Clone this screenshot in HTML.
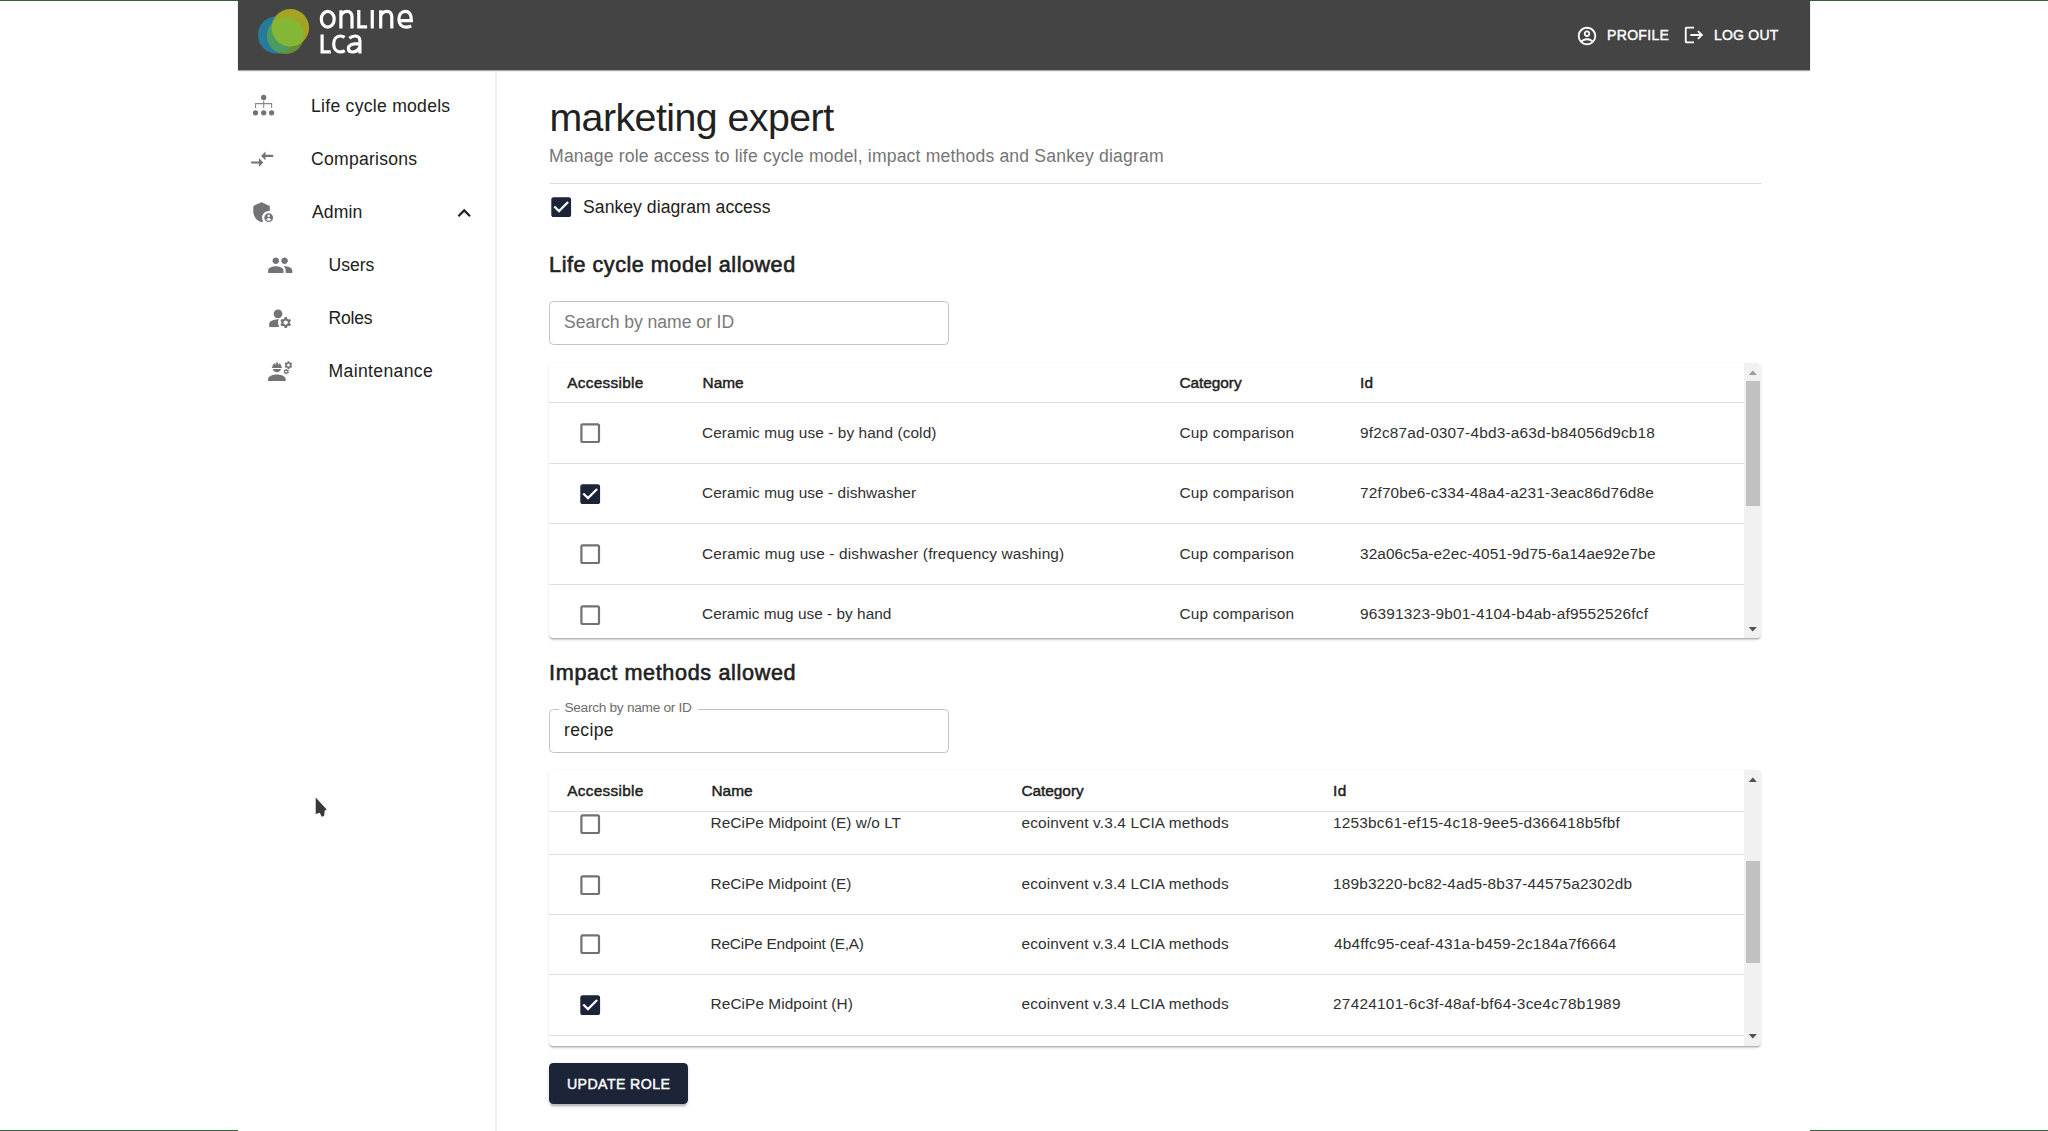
<!DOCTYPE html>
<html lang="en">
<head>
<meta charset="utf-8">
<title>marketing expert - Online LCA</title>
<style>
html,body{margin:0;padding:0;}
body{width:2048px;height:1131px;overflow:hidden;background:#fff;position:relative;font-family:"Liberation Sans",sans-serif;}
.abs,.t,.ic{position:absolute;}
.t{white-space:pre;font-weight:400;}
.t.m{-webkit-text-stroke:0.45px currentColor;}
.t.mm{-webkit-text-stroke:0.6px currentColor;}
.t.b{font-weight:700;}
.gl{position:absolute;height:1px;background:#30633a;}
.sep{position:absolute;height:1.1px;background:#e0e0e0;left:549.3px;width:1194.6px;}
.paper{position:absolute;background:#fff;border-radius:4.4px;box-shadow:0 1.8px 1.1px -1.1px rgba(0,0,0,.16),0 1.1px 1.1px 0 rgba(0,0,0,.09),0 1.1px 3.3px 0 rgba(0,0,0,.10);overflow:hidden;}
.sbt{position:absolute;right:0;top:0;bottom:0;width:17.6px;background:#f1f1f1;}
.thumb{position:absolute;left:1.9px;width:13.9px;background:#c1c1c1;}
</style>
</head>
<body>
<!-- frame lines -->
<div class="gl" style="left:0;top:0;width:238px"></div>
<div class="gl" style="left:1810px;top:0;width:238px"></div>
<div class="gl" style="left:0;top:1130px;width:238px"></div>
<div class="gl" style="left:1810px;top:1130px;width:238px"></div>

<!-- header -->
<div class="abs" id="hdr" style="left:238px;top:0;width:1572px;height:70px;background:#444444;box-shadow:0 1px 1px rgba(0,0,0,.35);"></div>
<!--LOGO_START--><svg class="abs" style="left:238px;top:0" width="240" height="70" viewBox="238 0 240 70">
<defs>
<clipPath id="cG"><circle cx="285.4" cy="35.7" r="18.4"/></clipPath>
<clipPath id="cB"><circle cx="276.6" cy="35.0" r="18.7"/></clipPath>
</defs>
<circle cx="276.6" cy="35.0" r="18.7" fill="#277a9b"/>
<circle cx="285.4" cy="35.7" r="18.4" fill="#6a8c35"/>
<g clip-path="url(#cG)"><circle cx="276.6" cy="35.0" r="18.7" fill="#4a9c60"/></g>
<circle cx="290.4" cy="27.7" r="18.7" fill="#a3a324"/>
<g clip-path="url(#cG)"><circle cx="290.4" cy="27.7" r="18.7" fill="#84b735"/></g>
<g fill="none" stroke="#fff" stroke-width="3.2" stroke-linejoin="miter">
<ellipse cx="327.75" cy="19.2" rx="6.45" ry="7.9"/>
<path d="M340.9 28.5V10.2M340.9 16.2C341.8 12.8 344.6 11.3 347 11.3C350.6 11.3 352 13.6 352 17.2V28.5"/>
<path d="M358.8 10V26.9H367.1"/>
<path d="M372.25 10V28.5"/>
<path d="M380.7 28.5V10.2M380.7 16.2C381.6 12.8 384.4 11.3 386.8 11.3C390.4 11.3 391.8 13.6 391.8 17.2V28.5"/>
<path d="M399 20.7H411.4C411.6 14.9 409.4 11.3 405.4 11.3C401.4 11.3 398.9 14.6 398.9 19.2C398.9 24 401.6 27.1 405.9 27.1C408 27.1 409.8 26.6 411.2 25.8"/>
<path d="M322.1 34.5V51.9H330.8"/>
<path d="M344.6 37.4C343.4 36.5 342 36 340.3 36C336.3 36 333.7 39.2 333.7 44C333.7 48.8 336.3 51.9 340.3 51.9C342 51.9 343.6 51.4 344.8 50.6"/>
<path d="M349.4 38.2C351 36.8 353 36 355 36C358.3 36 359.9 37.8 359.9 41V53.5M359.9 43.6C353 43.4 348.4 44.6 348.4 48.4C348.4 50.8 350.2 52 352.6 52C355.6 52 358.4 50 359.9 47"/>
</g>
</svg>
<!--LOGO_END-->
<!--HICONS_S--><svg class="ic" style="left:1575.7px;top:24.6px" width="22" height="22" viewBox="0 0 24 24" fill="#ffffff"><path d="M12 2C6.48 2 2 6.48 2 12s4.48 10 10 10 10-4.48 10-10S17.52 2 12 2zM7.07 18.28c.43-.9 3.05-1.78 4.93-1.78s4.51.88 4.93 1.78C15.57 19.36 13.86 20 12 20s-3.57-.64-4.93-1.72zm11.29-1.45c-1.43-1.74-4.9-2.33-6.36-2.33s-4.93.59-6.36 2.33C4.62 15.49 4 13.82 4 12c0-4.41 3.59-8 8-8s8 3.59 8 8c0 1.82-.62 3.49-1.64 4.83zM12 6c-1.94 0-3.5 1.56-3.5 3.5S10.060 13 12 13s3.5-1.56 3.5-3.5S13.94 6 12 6zm0 5c-.83 0-1.5-.67-1.5-1.5S11.17 8 12 8s1.5.67 1.5 1.5S12.83 11 12 11z"/></svg><svg class="ic" style="left:1682.5px;top:24.4px" width="22" height="22" viewBox="0 0 24 24" fill="#ffffff"><path d="M17 7l-1.41 1.41L18.17 11H8v2h10.17l-2.58 2.58L17 17l5-5zM4 5h8V3H4c-1.1 0-2 .9-2 2v14c0 1.1.9 2 2 2h8v-2H4V5z"/></svg><!--HICONS_E-->

<!-- sidebar -->
<div class="abs" style="left:495px;top:71px;width:2px;height:1060px;background:#efefef"></div>
<!--SICONS_S--><svg class="ic" style="left:246px;top:88px" width="36" height="36" viewBox="246 88 36 36">
<g fill="#737376"><circle cx="263.7" cy="97.4" r="2.65"/><circle cx="255.5" cy="112.8" r="2.65"/><circle cx="263.7" cy="112.8" r="2.65"/><circle cx="271.6" cy="112.8" r="2.65"/></g>
<path d="M255.5 108V103.6H271.6V108M263.7 100.5V108" fill="none" stroke="#88888c" stroke-width="1.1"/>
</svg><svg class="ic" style="left:249.1px;top:146.4px" width="26.4" height="26.4" viewBox="0 0 24 24" fill="#737376"><path d="M9.01 14H2v2h7.01v3L13 15l-3.99-4v3zm5.98-1v-3H22V8h-7.01V5L11 9l3.99 4z"/></svg><svg class="ic" style="left:249.5px;top:199.0px" width="26.4" height="26.4" viewBox="0 0 24 24" fill="#737376"><path d="M17 11c.34 0 .67.04 1 .09V6.27L10.5 3 3 6.27v4.91c0 4.54 3.2 8.79 7.5 9.82.55-.13 1.08-.32 1.6-.55-.69-.98-1.1-2.17-1.1-3.45 0-3.31 2.69-6 6-6z"/><path d="M17 13c-2.21 0-4 1.79-4 4s1.79 4 4 4 4-1.79 4-4-1.79-4-4-4zm0 1.380c.62 0 1.12.51 1.12 1.12s-.51 1.120-1.120 1.120-1.120-.51-1.120-1.120.5-1.120 1.120-1.120zm0 5.370c-.93 0-1.740-.46-2.240-1.170.05-.72 1.510-1.080 2.240-1.080s2.190.36 2.240 1.080c-.5.71-1.310 1.170-2.240 1.170z"/></svg><svg class="ic" style="left:451.4px;top:199.5px" width="26.4" height="26.4" viewBox="0 0 24 24" fill="#212121"><path d="M12 8l-6 6 1.41 1.410L12 10.830l4.590 4.580L18 14z"/></svg><svg class="ic" style="left:266.7px;top:251.7px" width="26.4" height="26.4" viewBox="0 0 24 24" fill="#737376"><path d="M16 11c1.660 0 2.990-1.340 2.990-3S17.660 5 16 5c-1.660 0-3 1.340-3 3s1.340 3 3 3zm-8 0c1.660 0 2.990-1.340 2.990-3S9.660 5 8 5C6.340 5 5 6.340 5 8s1.340 3 3 3zm0 2c-2.330 0-7 1.170-7 3.500V19h14v-2.500c0-2.330-4.670-3.500-7-3.500zm8 0c-.29 0-.62.020-.97.050 1.160.84 1.970 1.970 1.970 3.450V19h6v-2.500c0-2.330-4.670-3.500-7-3.500z"/></svg><svg class="ic" style="left:266.7px;top:304.6px" width="26.4" height="26.4" viewBox="0 0 24 24" fill="#737376"><circle cx="10" cy="8" r="4"/><path d="M10.670 13.020c-.22-.01-.44-.02-.67-.02-2.420 0-4.680.67-6.610 1.820-.88.520-1.390 1.500-1.390 2.530V20h9.260c-.79-1.130-1.260-2.510-1.260-4 0-1.070.25-2.070.67-2.980zM20.750 16c0-.22-.03-.42-.06-.63l1.140-1.010-1-1.730-1.450.49c-.32-.27-.68-.48-1.080-.63L18 11h-2l-.3 1.490c-.4.150-.76.360-1.080.63l-1.450-.49-1 1.730 1.140 1.010c-.3.210-.6.410-.6.630s.3.420.6.630l-1.140 1.010 1 1.730 1.450-.49c.32.270.68.480 1.080.63L16 21h2l.3-1.490c.4-.15.760-.36 1.080-.63l1.450.49 1-1.730-1.140-1.010c.03-.21.060-.41.060-.63zM17 18c-1.100 0-2-.9-2-2s.9-2 2-2 2 .9 2 2-.9 2-2 2z"/></svg><svg class="ic" style="left:266.7px;top:357.7px" width="26.4" height="26.4" viewBox="0 0 24 24" fill="#737376"><path d="M9 15c-2.670 0-8 1.340-8 4v2h16v-2c0-2.660-5.330-4-8-4zM22.100 6.840c.01-.11.020-.22.020-.34 0-.12-.01-.23-.03-.34l.74-.58c.07-.05.080-.15.040-.22l-.7-1.210c-.04-.08-.14-.1-.21-.08l-.86.350c-.18-.14-.38-.25-.59-.34l-.13-.93c-.02-.09-.09-.15-.18-.15h-1.400c-.09 0-.16.060-.17.150l-.13.930c-.21.090-.41.210-.59.340l-.87-.35c-.08-.03-.17 0-.21.080l-.7 1.210c-.04.080-.03.170.04.220l.74.580c-.02.110-.03.230-.03.340 0 .11.010.23.030.34l-.74.580c-.07.050-.08.150-.04.220l.7 1.210c.04.080.14.100.21.080l.87-.35c.18.140.38.250.59.340l.13.930c.010.09.080.15.170.15h1.400c.09 0 .16-.06.170-.15l.13-.93c.21-.09.41-.21.59-.34l.87.350c.08.030.17 0 .21-.08l.7-1.210c.04-.08.030-.17-.04-.22l-.73-.58zm-2.600.91c-.69 0-1.250-.56-1.250-1.250s.56-1.250 1.250-1.250 1.250.56 1.250 1.250-.56 1.250-1.250 1.250zM4.740 9h8.530c.27 0 .49-.22.490-.49v-.02c0-.27-.22-.49-.49-.49H13c0-1.480-.81-2.750-2-3.450v.95c0 .28-.22.500-.5.500s-.5-.22-.5-.5V4.140C9.680 4.060 9.350 4 9 4s-.68.060-1 .14V5.500c0 .28-.22.500-.5.500S7 5.780 7 5.500v-.95C5.810 5.250 5 6.520 5 8h-.26c-.27 0-.49.220-.49.490v.03c0 .26.220.48.490.48zM9 13c1.860 0 3.410-1.280 3.860-3H5.140c.45 1.720 2 3 3.860 3z"/><path transform="translate(17.5 12.4) scale(0.7) translate(-19.5 -6.5)" d="M22.1 6.84c.01-.11.02-.22.02-.34 0-.12-.01-.23-.03-.34l.74-.58c.07-.05.08-.15.04-.22l-.7-1.21c-.04-.08-.14-.1-.21-.08l-.86.35c-.18-.14-.38-.25-.59-.34l-.13-.93c-.02-.09-.09-.15-.18-.15h-1.4c-.09 0-.16.06-.17.15l-.13.93c-.21.09-.41.21-.59.34l-.87-.35c-.08-.03-.17 0-.21.08l-.7 1.21c-.04.08-.03.17.04.22l.74.58c-.02.11-.03.23-.03.34 0 .11.01.23.03.34l-.74.58c-.07.05-.08.15-.04.22l.7 1.21c.04.08.14.1.21.08l.87-.35c.18.14.38.25.59.34l.13.93c.01.09.08.15.17.15h1.4c.09 0 .16-.06.17-.15l.13-.93c.21-.09.41-.21.59-.34l.87.35c.08.03.17 0 .21-.08l.7-1.21c.04-.08.03-.17-.04-.22l-.73-.58zm-2.6.91c-.69 0-1.25-.56-1.25-1.25s.56-1.25 1.25-1.25 1.25.56 1.25 1.25-.56 1.25-1.25 1.25z"/></svg><!--SICONS_E-->

<!-- main -->
<div class="abs" style="left:549.3px;top:182.6px;width:1212.4px;height:1.1px;background:#e0e0e0"></div>

<div class="abs" style="left:549.3px;top:300.8px;width:399.7px;height:43.9px;box-sizing:border-box;border:1.1px solid #c4c4c4;border-radius:4.4px"></div>

<div class="paper" id="tb1" style="left:549.3px;top:362.5px;width:1212.2px;height:275.6px;">
  <div class="sbt">
    <svg class="abs" style="left:0;top:0" width="17.6" height="17.6" viewBox="0 0 17.6 17.6"><path d="M4.7 11.9 L8.8 7.4 L12.9 11.9z" fill="#9a9a9a"/></svg>
    <div class="thumb" style="top:18.1px;height:125.1px"></div>
    <svg class="abs" style="left:0;bottom:0" width="17.6" height="17.6" viewBox="0 0 17.6 17.6"><path d="M4.7 5.9 L8.8 10.4 L12.9 5.9z" fill="#505050"/></svg>
  </div>
</div>
<div class="sep" style="top:401.9px"></div>
<div class="sep" style="top:462.5px"></div>
<div class="sep" style="top:523.0px"></div>
<div class="sep" style="top:583.6px"></div>
<svg class="ic" style="left:547.60px;top:194.20px" width="26.4" height="26.4" viewBox="0 0 24 24"><path fill="#1c2438" d="M19 3H5c-1.11 0-2 .9-2 2v14c0 1.1.89 2 2 2h14c1.11 0 2-.9 2-2V5c0-1.1-.89-2-2-2zm-9 14l-5-5 1.41-1.41L10 14.17l7.59-7.59L19 8l-9 9z"/></svg>
<svg class="ic" style="left:576.70px;top:419.50px" width="26.4" height="26.4" viewBox="0 0 24 24"><path fill="#727274" d="M19 5v14H5V5h14m0-2H5c-1.1 0-2 .9-2 2v14c0 1.1.9 2 2 2h14c1.1 0 2-.9 2-2V5c0-1.1-.9-2-2-2z"/></svg>
<svg class="ic" style="left:576.70px;top:480.80px" width="26.4" height="26.4" viewBox="0 0 24 24"><path fill="#1c2438" d="M19 3H5c-1.11 0-2 .9-2 2v14c0 1.1.89 2 2 2h14c1.11 0 2-.9 2-2V5c0-1.1-.89-2-2-2zm-9 14l-5-5 1.41-1.41L10 14.17l7.59-7.59L19 8l-9 9z"/></svg>
<svg class="ic" style="left:576.70px;top:541.10px" width="26.4" height="26.4" viewBox="0 0 24 24"><path fill="#727274" d="M19 5v14H5V5h14m0-2H5c-1.1 0-2 .9-2 2v14c0 1.1.9 2 2 2h14c1.1 0 2-.9 2-2V5c0-1.1-.9-2-2-2z"/></svg>
<svg class="ic" style="left:576.70px;top:601.80px" width="26.4" height="26.4" viewBox="0 0 24 24"><path fill="#727274" d="M19 5v14H5V5h14m0-2H5c-1.1 0-2 .9-2 2v14c0 1.1.9 2 2 2h14c1.1 0 2-.9 2-2V5c0-1.1-.9-2-2-2z"/></svg>

<!-- input 2 -->
<div class="abs" style="left:549.3px;top:709.0px;width:399.7px;height:44.0px;box-sizing:border-box;border:1.1px solid #c4c4c4;border-radius:4.4px"></div>
<div class="abs" style="left:559px;top:708px;width:139.2px;height:3px;background:#fff"></div>

<div class="paper" id="tb2" style="left:549.3px;top:770.2px;width:1212.2px;height:275.9px;">
  <div class="sbt">
    <svg class="abs" style="left:0;top:0" width="17.6" height="17.6" viewBox="0 0 17.6 17.6"><path d="M4.7 11.9 L8.8 7.4 L12.9 11.9z" fill="#505050"/></svg>
    <div class="thumb" style="top:91.3px;height:101.5px"></div>
    <svg class="abs" style="left:0;bottom:0" width="17.6" height="17.6" viewBox="0 0 17.6 17.6"><path d="M4.7 5.9 L8.8 10.4 L12.9 5.9z" fill="#505050"/></svg>
  </div>
</div>
<div class="sep" style="top:810.7px"></div>
<div class="sep" style="top:853.6px"></div>
<div class="sep" style="top:913.8px"></div>
<div class="sep" style="top:974.0px"></div>
<div class="sep" style="top:1034.7px"></div>
<svg class="ic" style="left:576.70px;top:810.80px" width="26.4" height="26.4" viewBox="0 0 24 24"><path fill="#727274" d="M19 5v14H5V5h14m0-2H5c-1.1 0-2 .9-2 2v14c0 1.1.9 2 2 2h14c1.1 0 2-.9 2-2V5c0-1.1-.9-2-2-2z"/></svg>
<svg class="ic" style="left:576.70px;top:871.60px" width="26.4" height="26.4" viewBox="0 0 24 24"><path fill="#727274" d="M19 5v14H5V5h14m0-2H5c-1.1 0-2 .9-2 2v14c0 1.1.9 2 2 2h14c1.1 0 2-.9 2-2V5c0-1.1-.9-2-2-2z"/></svg>
<svg class="ic" style="left:576.70px;top:931.20px" width="26.4" height="26.4" viewBox="0 0 24 24"><path fill="#727274" d="M19 5v14H5V5h14m0-2H5c-1.1 0-2 .9-2 2v14c0 1.1.9 2 2 2h14c1.1 0 2-.9 2-2V5c0-1.1-.9-2-2-2z"/></svg>
<svg class="ic" style="left:576.70px;top:992.00px" width="26.4" height="26.4" viewBox="0 0 24 24"><path fill="#1c2438" d="M19 3H5c-1.11 0-2 .9-2 2v14c0 1.1.89 2 2 2h14c1.11 0 2-.9 2-2V5c0-1.1-.89-2-2-2zm-9 14l-5-5 1.41-1.41L10 14.17l7.59-7.59L19 8l-9 9z"/></svg>

<!-- button -->
<div class="abs" style="left:549.3px;top:1063.3px;width:138.9px;height:41px;background:#1c2438;border-radius:4.4px;box-shadow:0 3.3px 1.1px -2.2px rgba(0,0,0,.14),0 2.2px 2.2px 0 rgba(0,0,0,.09),0 1.1px 5.5px 0 rgba(0,0,0,.09);"></div>

<span id="profile" class="t m" style="left:1606.52px;top:27.46px;font-size:15.4px;line-height:15.4px;color:#ffffff;letter-spacing:0.369px;transform:scaleX(0.91);transform-origin:0 50%;">PROFILE</span>
<span id="logout" class="t m" style="left:1713.54px;top:27.46px;font-size:15.4px;line-height:15.4px;color:#ffffff;letter-spacing:0.229px;transform:scaleX(0.91);transform-origin:0 50%;">LOG OUT</span>
<span id="nav1" class="t" style="left:311.06px;top:97.90px;font-size:17.6px;line-height:17.6px;color:#212121;letter-spacing:0.260px;">Life cycle models</span>
<span id="nav2" class="t" style="left:311.06px;top:151.30px;font-size:17.6px;line-height:17.6px;color:#212121;letter-spacing:0.240px;">Comparisons</span>
<span id="nav3" class="t" style="left:311.96px;top:204.10px;font-size:17.6px;line-height:17.6px;color:#212121;letter-spacing:0.120px;">Admin</span>
<span id="nav4" class="t" style="left:328.58px;top:256.90px;font-size:17.6px;line-height:17.6px;color:#212121;letter-spacing:-0.040px;">Users</span>
<span id="nav5" class="t" style="left:328.58px;top:309.70px;font-size:17.6px;line-height:17.6px;color:#212121;letter-spacing:-0.280px;">Roles</span>
<span id="nav6" class="t" style="left:328.58px;top:362.70px;font-size:17.6px;line-height:17.6px;color:#212121;letter-spacing:0.336px;">Maintenance</span>
<span id="h1" class="t" style="left:549.40px;top:98.13px;font-size:39.3px;line-height:39.3px;color:#212121;letter-spacing:-0.533px;">marketing expert</span>
<span id="sub" class="t" style="left:549.10px;top:148.40px;font-size:17.6px;line-height:17.6px;color:#757575;letter-spacing:0.169px;">Manage role access to life cycle model, impact methods and Sankey diagram</span>
<span id="sankey" class="t" style="left:583.08px;top:198.90px;font-size:17.6px;line-height:17.6px;color:#212121;letter-spacing:0.032px;">Sankey diagram access</span>
<span id="h2a" class="t mm" style="left:549.10px;top:254.12px;font-size:21.6px;line-height:21.6px;color:#212121;letter-spacing:0.522px;">Life cycle model allowed</span>
<span id="ph1" class="t" style="left:564.08px;top:314.10px;font-size:17.6px;line-height:17.6px;color:#7a7a7a;letter-spacing:-0.059px;">Search by name or ID</span>
<span id="t1h1" class="t m" style="left:567.26px;top:375.16px;font-size:15.4px;line-height:15.4px;color:#212121;letter-spacing:0.284px;">Accessible</span>
<span id="t1h2" class="t m" style="left:702.52px;top:375.16px;font-size:15.4px;line-height:15.4px;color:#212121;letter-spacing:0.000px;">Name</span>
<span id="t1h3" class="t m" style="left:1179.52px;top:375.16px;font-size:15.4px;line-height:15.4px;color:#212121;letter-spacing:-0.046px;">Category</span>
<span id="t1h4" class="t m" style="left:1360.04px;top:375.16px;font-size:15.4px;line-height:15.4px;color:#212121;letter-spacing:0.160px;">Id</span>
<span id="h2b" class="t mm" style="left:549.10px;top:662.32px;font-size:21.6px;line-height:21.6px;color:#212121;letter-spacing:0.648px;">Impact methods allowed</span>
<span id="lbl2" class="t" style="left:564.42px;top:701.20px;font-size:13.7px;line-height:13.7px;color:#6e6e6e;letter-spacing:-0.295px;">Search by name or ID</span>
<span id="val2" class="t" style="left:564.08px;top:722.10px;font-size:17.6px;line-height:17.6px;color:#212121;letter-spacing:0.320px;">recipe</span>
<span id="t2h1" class="t m" style="left:567.26px;top:782.96px;font-size:15.4px;line-height:15.4px;color:#212121;letter-spacing:0.284px;">Accessible</span>
<span id="t2h2" class="t m" style="left:711.50px;top:782.96px;font-size:15.4px;line-height:15.4px;color:#212121;letter-spacing:0.000px;">Name</span>
<span id="t2h3" class="t m" style="left:1021.54px;top:782.96px;font-size:15.4px;line-height:15.4px;color:#212121;letter-spacing:-0.046px;">Category</span>
<span id="t2h4" class="t m" style="left:1333.06px;top:782.96px;font-size:15.4px;line-height:15.4px;color:#212121;letter-spacing:0.480px;">Id</span>
<span id="btn" class="t m" style="left:566.73px;top:1076.36px;font-size:15.4px;line-height:15.4px;color:#ffffff;letter-spacing:0.434px;transform:scaleX(0.92);transform-origin:0 50%;">UPDATE ROLE</span>
<span id="t1r0n" class="t" style="left:702.02px;top:425.46px;font-size:15.4px;line-height:15.4px;color:#303030;letter-spacing:0.083px;">Ceramic mug use - by hand (cold)</span>
<span id="t1r0c" class="t" style="left:1179.52px;top:425.46px;font-size:15.4px;line-height:15.4px;color:#303030;letter-spacing:0.197px;">Cup comparison</span>
<span id="t1r0i" class="t" style="left:1360.04px;top:425.46px;font-size:15.4px;line-height:15.4px;color:#303030;letter-spacing:0.183px;">9f2c87ad-0307-4bd3-a63d-b84056d9cb18</span>
<span id="t1r1n" class="t" style="left:702.02px;top:485.36px;font-size:15.4px;line-height:15.4px;color:#303030;letter-spacing:0.071px;">Ceramic mug use - dishwasher</span>
<span id="t1r1c" class="t" style="left:1179.52px;top:485.36px;font-size:15.4px;line-height:15.4px;color:#303030;letter-spacing:0.197px;">Cup comparison</span>
<span id="t1r1i" class="t" style="left:1360.04px;top:485.36px;font-size:15.4px;line-height:15.4px;color:#303030;letter-spacing:0.155px;">72f70be6-c334-48a4-a231-3eac86d76d8e</span>
<span id="t1r2n" class="t" style="left:702.02px;top:545.86px;font-size:15.4px;line-height:15.4px;color:#303030;letter-spacing:0.153px;">Ceramic mug use - dishwasher (frequency washing)</span>
<span id="t1r2c" class="t" style="left:1179.52px;top:545.86px;font-size:15.4px;line-height:15.4px;color:#303030;letter-spacing:0.197px;">Cup comparison</span>
<span id="t1r2i" class="t" style="left:1360.04px;top:545.86px;font-size:15.4px;line-height:15.4px;color:#303030;letter-spacing:0.078px;">32a06c5a-e2ec-4051-9d75-6a14ae92e7be</span>
<span id="t1r3n" class="t" style="left:702.02px;top:605.96px;font-size:15.4px;line-height:15.4px;color:#303030;letter-spacing:0.013px;">Ceramic mug use - by hand</span>
<span id="t1r3c" class="t" style="left:1179.52px;top:605.96px;font-size:15.4px;line-height:15.4px;color:#303030;letter-spacing:0.197px;">Cup comparison</span>
<span id="t1r3i" class="t" style="left:1360.04px;top:605.96px;font-size:15.4px;line-height:15.4px;color:#303030;letter-spacing:0.206px;">96391323-9b01-4104-b4ab-af9552526fcf</span>
<span id="t2r0n" class="t" style="left:710.60px;top:815.26px;font-size:15.4px;line-height:15.4px;color:#303030;letter-spacing:0.032px;">ReCiPe Midpoint (E) w/o LT</span>
<span id="t2r0c" class="t" style="left:1021.54px;top:815.26px;font-size:15.4px;line-height:15.4px;color:#303030;letter-spacing:0.142px;">ecoinvent v.3.4 LCIA methods</span>
<span id="t2r0i" class="t" style="left:1333.06px;top:815.26px;font-size:15.4px;line-height:15.4px;color:#303030;letter-spacing:0.197px;">1253bc61-ef15-4c18-9ee5-d366418b5fbf</span>
<span id="t2r1n" class="t" style="left:710.60px;top:875.96px;font-size:15.4px;line-height:15.4px;color:#303030;letter-spacing:0.027px;">ReCiPe Midpoint (E)</span>
<span id="t2r1c" class="t" style="left:1021.54px;top:875.96px;font-size:15.4px;line-height:15.4px;color:#303030;letter-spacing:0.142px;">ecoinvent v.3.4 LCIA methods</span>
<span id="t2r1i" class="t" style="left:1333.06px;top:875.96px;font-size:15.4px;line-height:15.4px;color:#303030;letter-spacing:0.155px;">189b3220-bc82-4ad5-8b37-44575a2302db</span>
<span id="t2r2n" class="t" style="left:710.60px;top:935.96px;font-size:15.4px;line-height:15.4px;color:#303030;letter-spacing:-0.200px;">ReCiPe Endpoint (E,A)</span>
<span id="t2r2c" class="t" style="left:1021.54px;top:935.96px;font-size:15.4px;line-height:15.4px;color:#303030;letter-spacing:0.142px;">ecoinvent v.3.4 LCIA methods</span>
<span id="t2r2i" class="t" style="left:1333.96px;top:935.96px;font-size:15.4px;line-height:15.4px;color:#303030;letter-spacing:0.224px;">4b4ffc95-ceaf-431a-b459-2c184a7f6664</span>
<span id="t2r3n" class="t" style="left:710.60px;top:995.96px;font-size:15.4px;line-height:15.4px;color:#303030;letter-spacing:0.062px;">ReCiPe Midpoint (H)</span>
<span id="t2r3c" class="t" style="left:1021.54px;top:995.96px;font-size:15.4px;line-height:15.4px;color:#303030;letter-spacing:0.142px;">ecoinvent v.3.4 LCIA methods</span>
<span id="t2r3i" class="t" style="left:1333.06px;top:995.96px;font-size:15.4px;line-height:15.4px;color:#303030;letter-spacing:0.242px;">27424101-6c3f-48af-bf64-3ce4c78b1989</span>

<!-- cursor -->
<svg class="abs" style="left:300px;top:785px" width="45" height="45" viewBox="300 785 45 45"><path d="M315.7 797.6 L326.7 809.6 L324.7 810.4 L324.1 816.1 L321.7 816.8 L319.8 812.8 L315.7 814z" fill="#3a3838"/></svg>
</body>
</html>
